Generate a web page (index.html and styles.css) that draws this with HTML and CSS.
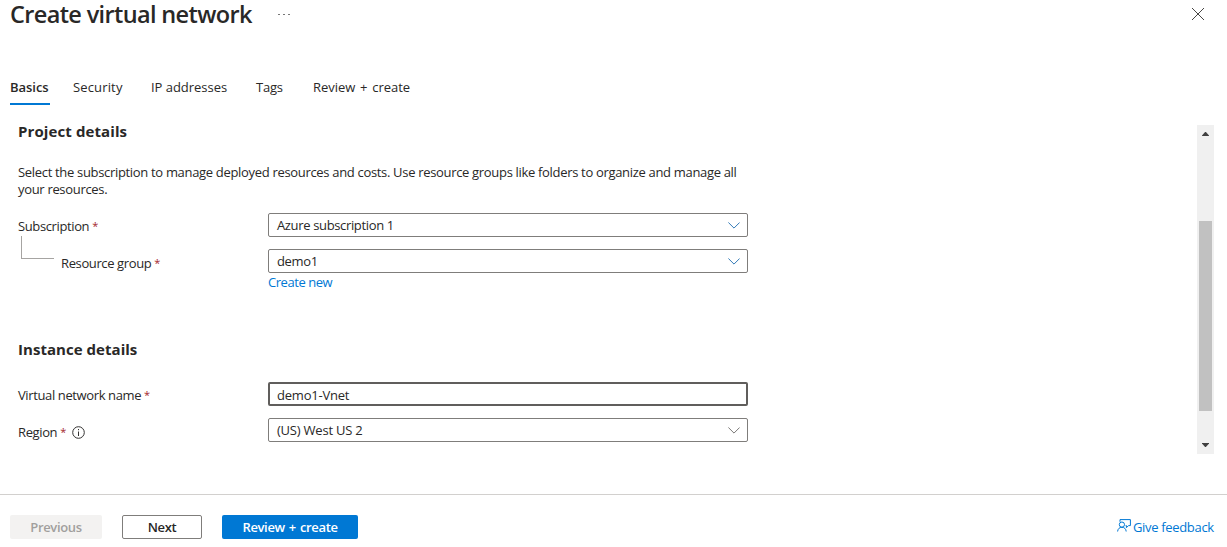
FILE: index.html
```html
<!DOCTYPE html>
<html lang="en">
<head>
<meta charset="utf-8">
<title>Create virtual network</title>
<link rel="stylesheet" href="styles.css">
</head>
<body>
<div class="blade">
  <header class="header">
    <h1 class="title">Create virtual network</h1>
    <span class="more"><i></i><i></i><i></i></span>
    <svg class="close" width="12" height="12" viewBox="0 0 12 12"><path d="M0 0L12 12M12 0L0 12"/></svg>
  </header>
  <nav class="tabs">
    <a class="tab tab-basics active"><span>Basics</span></a>
    <a class="tab tab-security"><span>Security</span></a>
    <a class="tab tab-ip"><span>IP addresses</span></a>
    <a class="tab tab-tags"><span>Tags</span></a>
    <a class="tab tab-review"><span>Review + create</span></a>
  </nav>
  <main class="content">
    <div class="form">
      <h2 class="section section-project"><span>Project details</span></h2>
      <p class="intro"><span>Select the subscription to manage deployed resources and costs. Use resource groups like folders to organize and manage all</span><br>your resources.</p>
      <div class="row row-subscription">
        <label class="label">Subscription <b>*</b></label>
        <div class="field tight"><span>Azure subscription 1</span><svg class="chevron blue" width="12" height="7" viewBox="0 0 12 7"><path d="M.4.5L6 6.1L11.6.5"/></svg></div>
      </div>
      <div class="row row-group">
        <i class="branch"></i>
        <label class="label">Resource group <b>*</b></label>
        <div class="field tight"><span>demo1</span><svg class="chevron blue" width="12" height="7" viewBox="0 0 12 7"><path d="M.4.5L6 6.1L11.6.5"/></svg></div>
      </div>
      <a class="create-new"><span>Create new</span></a>
      <h2 class="section section-instance"><span>Instance details</span></h2>
      <div class="row row-name">
        <label class="label">Virtual network name <b>*</b></label>
        <div class="field focused"><span>demo1-Vnet</span></div>
      </div>
      <div class="row row-region">
        <label class="label">Region <b>*</b><svg class="info" width="13" height="13" viewBox="0 0 13 13"><circle cx="6.5" cy="6.5" r="5.8"/><path d="M6.5 5.5V10M6.5 3V4.2"/></svg></label>
        <div class="field"><span>(US) West US 2</span><svg class="chevron" width="12" height="7" viewBox="0 0 12 7"><path d="M.4.5L6 6.1L11.6.5"/></svg></div>
      </div>
    </div>
    <div class="scrollbar">
      <svg width="7" height="4" viewBox="0 0 7 4"><path d="M0 4V3.4L3.1 0H3.9L7 3.4V4Z"/></svg>
      <div class="thumb"></div>
      <svg class="down" width="7" height="4" viewBox="0 0 7 4"><path d="M0 0V.6L3.1 4H3.9L7 .6V0Z"/></svg>
    </div>
  </main>
  <footer class="footer">
    <button class="button previous"><span>Previous</span></button>
    <button class="button next"><span>Next</span></button>
    <button class="button primary"><span>Review + create</span></button>
    <a class="feedback"><svg width="14" height="13" viewBox="0 0 14 13"><path d="M3 2.8V.6H13.4V6.6H11.6L9.4 8.6V6.6H8.6"/><circle cx="4.9" cy="5.6" r="2.6"/><path d="M.6 12.5C.8 9.8 2.5 8.3 4.9 8.3S9 9.8 9.2 12.5"/></svg><span>Give feedback</span></a>
  </footer>
</div>
</body>
</html>
```
FILE: styles.css
```css
* { box-sizing: border-box; }
body { margin: 0; background: #fff; color: #292827; font: 13px/18px "Open Sans", "Noto Sans", sans-serif; overflow: hidden; }
h1, h2, p { margin: 0; }
span { white-space: nowrap; }
.blade { width: 1227px; height: 547px; display: flex; flex-direction: column; }
.header { height: 76px; display: flex; align-items: flex-start; padding: 0 23px 0 10px; }
.title { width: 268px; font-size: 23.5px; line-height: 29px; font-weight: 600; white-space: nowrap; letter-spacing: -.64px; }
.more { display: flex; gap: 3px; padding-top: 14px; }
.more i { width: 2px; height: 1px; background: #777; }
.close { margin: 8px 0 0 auto; stroke: #484644; fill: none; }
.tabs { height: 29px; flex: none; display: flex; padding-left: 10px; }
.tab { height: 29px; padding-top: 2px; letter-spacing: -.03px; }
.tab-basics { width: 40px; margin-right: 23px; }
.tab-security { width: 78px; letter-spacing: .15px; }
.tab-ip { width: 105px; }
.tab-tags { width: 57px; letter-spacing: -.2px; }
.tab-review { word-spacing: 1.4px; }
.active { border-bottom: 2px solid #0078d4; font-weight: 600; }
.content { height: 389px; flex: none; display: flex; justify-content: space-between; padding: 20px 13px 0 18px; }
.form { width: 730px; margin-top: -3px; }
.section { font-size: 15px; line-height: 20px; font-weight: 700; margin-top: -1px; letter-spacing: .1px; }
.section-instance { letter-spacing: .04px; }
.intro { margin-top: 23px; line-height: 17px; letter-spacing: -.32px; }
.row { display: flex; position: relative; height: 24px; }
.row-subscription { margin-top: 15px; }
.row-group { margin-top: 12px; }
.row-group .label { padding: 5px 0 0 43px; }
.label { width: 250px; padding-top: 4px; letter-spacing: -.38px; display: flex; white-space: pre; }
.label b { color: #a4262c; font-weight: 400; font-size: 11px; }
.branch { position: absolute; left: 3px; top: -13px; width: 33px; height: 23px; border: solid #a6a4a2; border-width: 0 0 1px 1px; }
.field { width: 480px; height: 24px; border: 1px solid #7f7d7b; border-radius: 2px; padding: 0 7px 0 8px; display: flex; align-items: center; justify-content: space-between; letter-spacing: -.22px; }
.tight { letter-spacing: -.35px; }
.focused { border: 2px solid #605e5c; padding: 2px 7px 0; }
.chevron { fill: none; stroke: #797775; }
.blue { stroke: #327ab7; }
.create-new { display: block; margin-left: 250px; color: #0078d4; letter-spacing: -.45px; }
.section-instance { margin-top: 48px; }
.row-name { margin-top: 23px; }
.row-region { margin-top: 12px; }
.row-region .label { padding-top: 5px; }
.info { margin: 3px 0 0 6px; fill: none; stroke: #323130; }
.scrollbar { width: 17px; height: 329px; background: #f0f0f0; display: flex; flex-direction: column; align-items: center; padding: 7px 0; fill: #404040; }
.thumb { width: 13px; height: 190px; margin-top: 85px; background: #c1c1c1; }
.down { margin-top: auto; }
.footer { height: 53px; flex: none; border-top: 1px solid #d2d0ce; display: flex; align-items: flex-start; padding: 20px 13px 0 10px; }
.button { height: 24px; border: 0; border-radius: 2px; padding: 0; font: 600 13px/22px "Open Sans", "Noto Sans", sans-serif; margin-right: 20px; color: #292827; letter-spacing: -.35px; }
.previous { width: 92px; background: #f3f2f1; color: #a19f9d; }
.next { width: 80px; border: 1px solid #7f7d7b; background: #fff; }
.primary { width: 136px; background: #0078d4; color: #fff; word-spacing: 1px; }
.feedback { display: flex; margin-left: auto; width: 97px; gap: 2px; padding-top: 3px; color: #0078d4; letter-spacing: -.33px; }
.feedback svg { fill: none; stroke: #0078d4; flex: none; margin-top: 1px; }
```
